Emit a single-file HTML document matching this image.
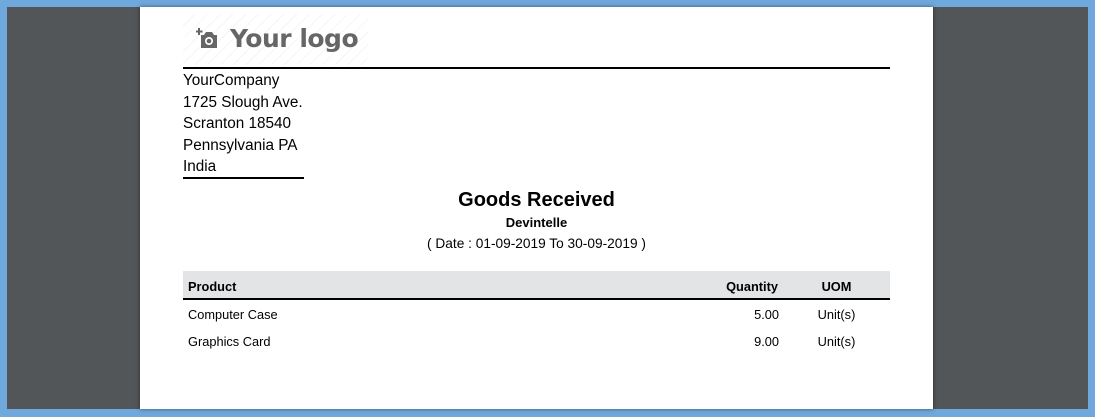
<!DOCTYPE html>
<html><head><style>
body{margin:0;width:1095px;height:417px;background:#6fa8dc;position:relative;overflow:hidden;font-family:"Liberation Sans",sans-serif;color:#000}
.dark{position:absolute;left:7px;top:7px;width:1081px;height:402px;background:#525659}
.page{position:absolute;left:140px;top:7px;width:793px;height:402px;background:#fff;box-shadow:0 0 4px rgba(0,0,0,.5)}
.abs{position:absolute}
.addr{left:43px;top:63px;font-size:15.3px;line-height:21.5px}
</style></head><body>
<div class="dark"></div>
<div class="page">
 <div class="abs" style="left:43px;top:7px;width:185px;height:51px;background:repeating-linear-gradient(135deg,#fff 0 8px,#f5f5f5 8px 9px)"></div>
 <svg class="abs" style="left:56px;top:20px" width="24" height="24" viewBox="0 0 24 24"><path d="M3 1v7M-0.5 4.5h7" stroke="#666" stroke-width="2"/><path d="M5 8h3l2-3h6l2 3h3v13H5z" fill="#666"/><circle cx="13" cy="14" r="4" fill="#fff"/><circle cx="13" cy="14" r="2.3" fill="#666"/></svg>
 <div class="abs" style="left:90px;top:17px;font-size:25px;font-weight:bold;color:#666;font-family:'DejaVu Sans','Liberation Sans',sans-serif;letter-spacing:-0.5px">Your logo</div>
 <div class="abs" style="left:43px;top:60px;width:707px;height:2px;background:#000"></div>
 <div class="abs addr">YourCompany<br>1725 Slough Ave.<br>Scranton 18540<br>Pennsylvania PA<br>India</div>
 <div class="abs" style="left:43px;top:170px;width:121px;height:2px;background:#000"></div>
 <div class="abs" style="left:0;width:793px;top:182px;text-align:center;font-size:20px;font-weight:bold">Goods Received</div>
 <div class="abs" style="left:0;width:793px;top:208px;text-align:center;font-size:13px;font-weight:bold">Devintelle</div>
 <div class="abs" style="left:0;width:793px;top:229px;text-align:center;font-size:13.7px">( Date : 01-09-2019 To 30-09-2019 )</div>
 <div class="abs" style="left:43px;top:264px;width:707px;height:27px;background:#e3e4e6"></div>
 <div class="abs" style="left:43px;top:291px;width:707px;height:2px;background:#000"></div>
 <div class="abs" style="left:48px;top:272px;font-size:12.8px;font-weight:bold">Product</div>
 <div class="abs" style="left:560px;width:78px;top:272px;text-align:right;font-size:12.8px;font-weight:bold">Quantity</div>
 <div class="abs" style="left:665px;width:63px;top:272px;text-align:center;font-size:12.8px;font-weight:bold">UOM</div>
 <div class="abs" style="left:48px;top:300px;font-size:12.8px">Computer Case</div>
 <div class="abs" style="left:560px;width:79px;top:300px;text-align:right;font-size:12.8px">5.00</div>
 <div class="abs" style="left:665px;width:63px;top:300px;text-align:center;font-size:12.8px">Unit(s)</div>
 <div class="abs" style="left:48px;top:327px;font-size:12.8px">Graphics Card</div>
 <div class="abs" style="left:560px;width:79px;top:327px;text-align:right;font-size:12.8px">9.00</div>
 <div class="abs" style="left:665px;width:63px;top:327px;text-align:center;font-size:12.8px">Unit(s)</div>
</div>
</body></html>
